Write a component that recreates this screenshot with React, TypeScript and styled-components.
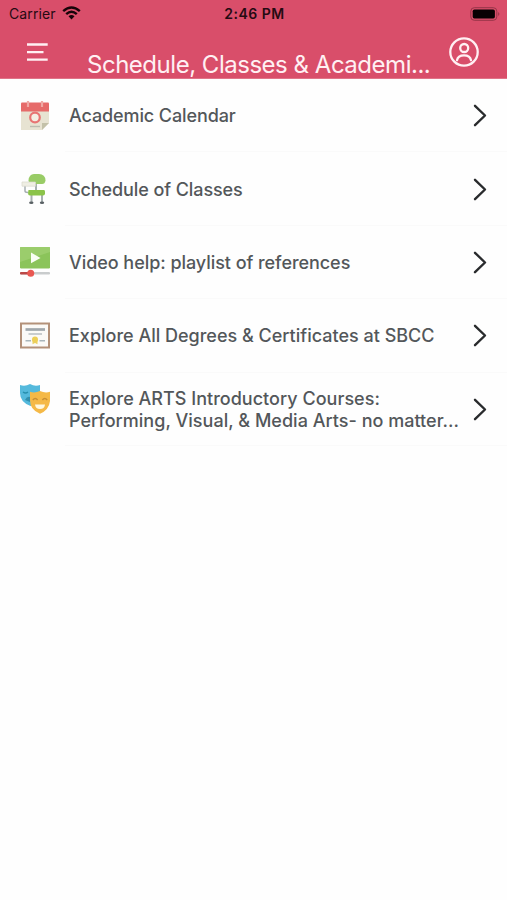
import React from "react";
import styled, { createGlobalStyle } from "styled-components";

const GlobalStyle = createGlobalStyle`
  * { box-sizing: border-box; }
  body { margin: 0; background: #fefefe; font-family: Inter, "Liberation Sans", sans-serif; }
`;

const Screen = styled.div`
  width: 507px;
  height: 900px;
  overflow: hidden;
  background: #fefefe;
`;

const Header = styled.header`
  height: 79px;
  background: #d94e6a;
  border-bottom: 1px solid #e07488;
`;

const StatusBar = styled.div`
  height: 27px;
  display: grid;
  grid-template-columns: 1fr auto 1fr;
  align-items: center;
  padding: 0 7px 0 9px;
  color: #260a12;
  font-size: 14px;
  line-height: 27px;
`;

const Carrier = styled.div`
  display: flex;
  align-items: center;
  gap: 6px;
  letter-spacing: 0.12px;
  svg { margin-top: -2px; }
`;

const Clock = styled.div`
  font-weight: 600;
  letter-spacing: 0.5px;
`;

const BatterySlot = styled.div`
  display: flex;
  justify-content: flex-end;
`;

const NavBar = styled.div`
  height: 51px;
  display: flex;
  align-items: flex-start;
  color: #fff0f3;
`;

const MenuButton = styled.button`
  display: flex;
  align-items: flex-start;
  width: 87px;
  padding: 15px 0 0 26px;
  border: 0;
  background: none;
  color: inherit;
`;

const Title = styled.h1`
  margin: 0;
  padding-top: 23px;
  width: 361px;
  font-size: 24px;
  line-height: 30px;
  font-weight: 400;
  letter-spacing: -0.48px;
  white-space: nowrap;
`;

const ProfileButton = styled.button`
  padding: 9px 0 0;
  border: 0;
  background: none;
  color: inherit;
  line-height: 0;
`;

const List = styled.ul`
  margin: 0;
  padding: 0;
  list-style: none;
`;

const Row = styled.li`
  height: 73.4px;
  display: flex;
  padding-left: 20px;
`;

const IconSlot = styled.div<{ $top: number }>`
  width: 45px;
  padding-top: ${(p) => p.$top}px;
  line-height: 0;
`;

const RowBody = styled.div`
  flex: 1;
  display: flex;
  align-items: center;
  padding-left: 4px;
  border-bottom: 1px solid #fafafa;
`;

const Label = styled.div<{ $spacing: number }>`
  width: 404px;
  padding-top: 2px;
  color: #53575a;
  font-size: 18px;
  line-height: 22px;
  font-weight: 500;
  letter-spacing: ${(p) => p.$spacing}px;
  white-space: pre;
`;

const Wifi = () => (
  <svg width="19" height="14" viewBox="0 0 19 14" fill="none" stroke="#180409" strokeWidth="2.5">
    <path d="M1.2 5.1Q9.5-2 17.8 5.1" />
    <path d="M4.2 8.1Q9.5 3.4 14.8 8.1" />
    <path d="M6.5 10.2Q9.5 7.7 12.5 10.2L9.5 13.4Z" fill="#180409" stroke="none" />
  </svg>
);

const Battery = () => (
  <svg width="30" height="14" viewBox="0 0 30 14">
    <rect x=".8" y=".7" width="26" height="12.6" rx="3.5" fill="none" stroke="#963548" />
    <rect x="2.7" y="2.6" width="22.2" height="8.8" rx="1.7" fill="#090103" />
    <path d="M28.2 5Q30.6 7 28.2 9Z" fill="#963548" />
  </svg>
);

const MenuIcon = () => (
  <svg width="23" height="21" viewBox="0 0 23 21" stroke="currentColor" strokeWidth="2.3">
    <path d="M1 2.5H21.7M1 10.2H17.5M1 17.7H21.7" />
  </svg>
);

const ProfileIcon = () => (
  <svg width="32" height="32" viewBox="0 0 32 32" fill="none" stroke="currentColor" strokeWidth="2.3">
    <circle cx="16" cy="16" r="13.7" />
    <circle cx="16.2" cy="12" r="4" />
    <path d="M9 24.2C10.2 17.8 21.8 17.8 23 24.2" strokeLinecap="round" />
  </svg>
);

const Chevron = () => (
  <svg width="15" height="24" viewBox="0 0 15 24" fill="none" stroke="#292b2d" strokeWidth="2.4" strokeLinecap="round" strokeLinejoin="round">
    <path d="M2 2.8L12 12.5L2 22.2" />
  </svg>
);

const CalendarIcon = () => (
  <svg width="30" height="30" viewBox="0 0 30 30">
    <path d="M1 9H29V22L22 29H1Z" fill="#e7e3d2" />
    <path d="M22 29V22H29Z" fill="#c3c1a9" />
    <path d="M1 2.5Q1 1.5 2 1.5H28Q29 1.5 29 2.5V10.5H1Z" fill="#e66b6a" />
    <path d="M8 0V6M22 0V6" stroke="#efa9a5" strokeWidth="2.2" />
    <circle cx="15" cy="16.5" r="4.8" fill="#f4efe4" stroke="#e87574" strokeWidth="2.2" />
    <path d="M10 25.5H20" stroke="#bcbcb0" strokeWidth="1.4" />
  </svg>
);

const ChairIcon = () => (
  <svg width="30" height="32" viewBox="0 0 30 32">
    <path d="M11.5 20V28M22 20V28M16 10V16" fill="none" stroke="#a7b0b0" strokeWidth="2" />
    <path d="M8.5 6.5Q9 0 14 0H19Q25.2 0 25.5 6.5Q25 10 22 10H12Q9 10 8.5 6.5Z" fill="#99cc66" />
    <path d="M8.5 16H24Q25 16 25 17.5V19.5Q25 21.5 23 21.5H10Q8 21.5 8 19Z" fill="#8bc34a" />
    <path d="M5 12V17Q5 18.5 8 18.5" fill="none" stroke="#a6aeb3" strokeWidth="1.5" />
    <path d="M2 8H15.5V12.2H2Z" fill="#efeee4" stroke="#d8d9cb" strokeWidth=".7" />
    <ellipse cx="11.3" cy="28.7" rx="2.2" ry="1.3" fill="#596064" />
    <ellipse cx="22" cy="28.7" rx="2.2" ry="1.3" fill="#596064" />
  </svg>
);

const VideoIcon = () => (
  <svg width="30" height="32" viewBox="0 0 30 32">
    <rect y="1" width="30" height="21.5" rx="1.2" fill="#8bc45a" />
    <path d="M0 16L30 6V2Q30 1 29 1H1Q0 1 0 2Z" fill="#9bcd6c" />
    <path d="M11 6.5L20.5 12L11 17.2Z" fill="#fafff5" />
    <path d="M1 27.3H29" stroke="#c9cccd" strokeWidth="2.4" strokeLinecap="round" />
    <path d="M1 27.3H11" stroke="#bc4947" strokeWidth="2.4" strokeLinecap="round" />
    <circle cx="10.7" cy="27.3" r="3.5" fill="#e95852" />
  </svg>
);

const CertificateIcon = () => (
  <svg width="30" height="30" viewBox="0 0 30 30">
    <rect x="1" y="2.5" width="28" height="24" fill="#fbfaf7" stroke="#b39179" strokeWidth="2" />
    <path d="M5.5 8.5H25" stroke="#a0a7ac" strokeWidth="2.7" />
    <path d="M8.5 13H22" stroke="#b4b9bc" strokeWidth="1.4" />
    <path d="M5.5 19.8H11M19.5 19.8H25" stroke="#a9b5ba" strokeWidth="1.6" />
    <path d="M12.5 19H17.5V23.2L15 22L12.5 23.2Z" fill="#ead164" />
    <circle cx="15" cy="18.6" r="3" fill="#edcf57" />
  </svg>
);

const MasksIcon = () => (
  <svg width="31" height="31" viewBox="0 0 31 31">
    <path d="M0 1Q5 3 10 0Q15 3 20 1V12Q18 20 10.5 22Q0 18 0 9Z" fill="#54b9dc" />
    <path d="M3 8Q5.5 10 8 8" fill="none" stroke="#278fae" strokeWidth="1.4" />
    <path d="M5 16Q7 12 10 13V18Z" fill="#318fae" />
    <path d="M10 7.8Q15 9.3 20 7Q25 9.3 30 7.8V17Q29 26 20 29.7Q10 26 10 16Z" fill="#f5b947" />
    <path d="M12.8 16Q15.3 13 17.6 16M22.4 16Q24.7 13 27.2 16" fill="none" stroke="#c98f35" strokeWidth="1.4" />
    <path d="M15 20.5H25Q24.5 25 20 25Q15.5 25 15 20.5Z" fill="#fff8df" />
  </svg>
);

const items = [
  { label: "Academic Calendar", icon: CalendarIcon, spacing: -0.11, iconTop: 22 },
  { label: "Schedule of Classes", icon: ChairIcon, spacing: -0.09, iconTop: 21.6 },
  { label: "Video help: playlist of references", icon: VideoIcon, spacing: -0.05, iconTop: 20.2 },
  { label: "Explore All Degrees & Certificates at SBCC", icon: CertificateIcon, spacing: 0, iconTop: 21.8 },
  { label: "Explore ARTS Introductory Courses:\nPerforming, Visual, & Media Arts- no matter...", icon: MasksIcon, spacing: 0.02, iconTop: 11.4 },
];

export default function App() {
  return (
    <Screen>
      <GlobalStyle />
      <Header>
        <StatusBar>
          <Carrier>Carrier <Wifi /></Carrier>
          <Clock>2:46 PM</Clock>
          <BatterySlot><Battery /></BatterySlot>
        </StatusBar>
        <NavBar>
          <MenuButton aria-label="Menu"><MenuIcon /></MenuButton>
          <Title>Schedule, Classes &amp; Academi...</Title>
          <ProfileButton aria-label="Profile"><ProfileIcon /></ProfileButton>
        </NavBar>
      </Header>
      <List>
        {items.map(({ label, icon: Icon, spacing, iconTop }) => (
          <Row key={label}>
            <IconSlot $top={iconTop}><Icon /></IconSlot>
            <RowBody>
              <Label $spacing={spacing}>{label}</Label>
              <Chevron />
            </RowBody>
          </Row>
        ))}
      </List>
    </Screen>
  );
}
